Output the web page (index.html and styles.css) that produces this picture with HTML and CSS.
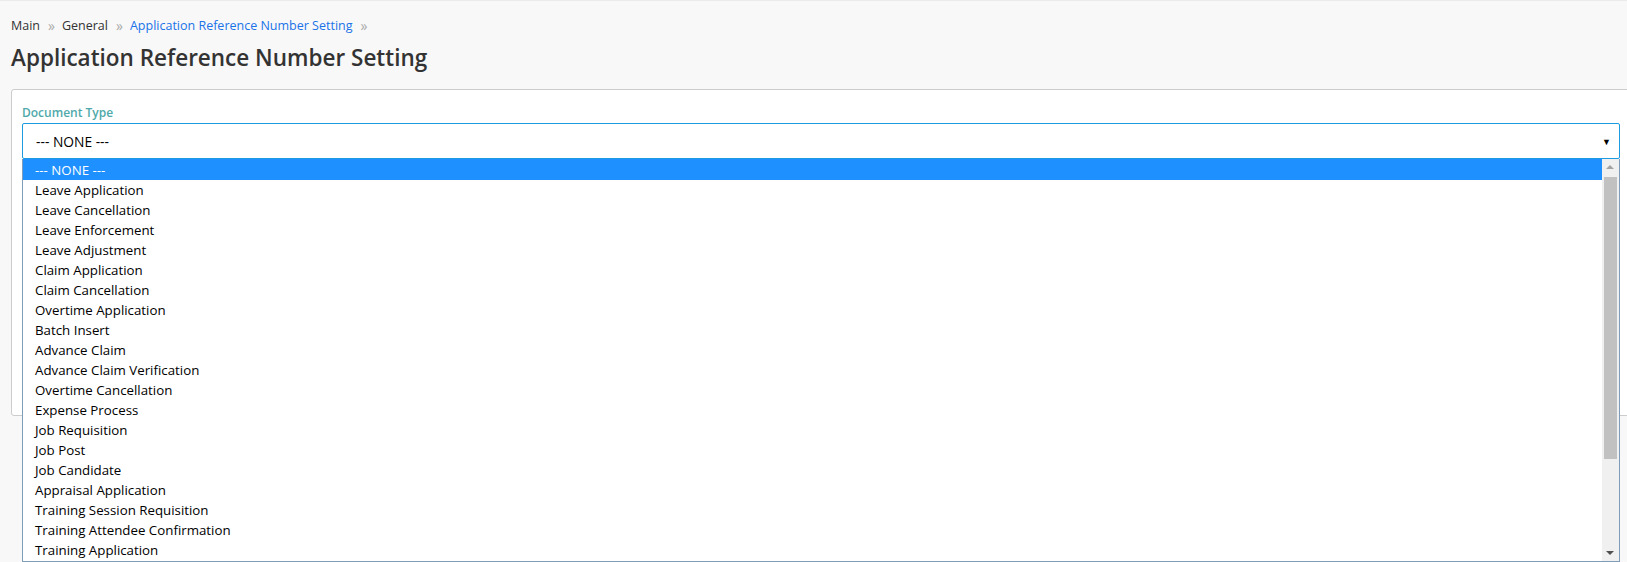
FILE: index.html
```html
<!DOCTYPE html>
<html>
<head>
<meta charset="utf-8">
<link rel="stylesheet" href="styles.css">
</head>
<body>
<div class="page">
  <nav class="crumbs">
    <span class="crumb">Main</span><span class="sep">»</span>
    <span class="crumb">General</span><span class="sep">»</span>
    <span class="crumb active">Application Reference Number Setting</span><span class="sep">»</span>
  </nav>
  <h1 class="title">Application Reference Number Setting</h1>
  <div class="card">
    <label class="label">Document Type</label>
    <div class="select-wrap">
      <div class="select">
        <span class="select-value">--- NONE ---</span>
        <span class="caret">▼</span>
      </div>
      <div class="dropdown">
        <ul class="options">
          <li class="opt selected">--- NONE ---</li>
          <li class="opt">Leave Application</li>
          <li class="opt">Leave Cancellation</li>
          <li class="opt">Leave Enforcement</li>
          <li class="opt">Leave Adjustment</li>
          <li class="opt">Claim Application</li>
          <li class="opt">Claim Cancellation</li>
          <li class="opt">Overtime Application</li>
          <li class="opt">Batch Insert</li>
          <li class="opt">Advance Claim</li>
          <li class="opt">Advance Claim Verification</li>
          <li class="opt">Overtime Cancellation</li>
          <li class="opt">Expense Process</li>
          <li class="opt">Job Requisition</li>
          <li class="opt">Job Post</li>
          <li class="opt">Job Candidate</li>
          <li class="opt">Appraisal Application</li>
          <li class="opt">Training Session Requisition</li>
          <li class="opt">Training Attendee Confirmation</li>
          <li class="opt">Training Application</li>
        </ul>
        <div class="scrollbar">
          <div class="arrow up"></div>
          <div class="track"><div class="thumb"></div></div>
          <div class="arrow down"></div>
        </div>
      </div>
    </div>
  </div>
</div>
</body>
</html>
```
FILE: styles.css
```css
html, body {
  margin: 0;
  padding: 0;
  height: 100%;
  overflow: hidden;
}
body {
  background: #f8f8f8;
  border-top: 1px solid #ebebeb;
  box-sizing: border-box;
  font-family: "Open Sans", "Noto Sans", sans-serif;
  color: #333;
}
.page {
  padding-left: 11px;
}
.crumbs {
  padding-top: 16px;
  font-size: 12.5px;
  line-height: 17px;
  display: flex;
  align-items: center;
  color: #333;
}
.sep {
  color: #aaa;
  margin: 0 7px 0 8px;
  font-size: 14px;
}
.crumb.active {
  color: #1a73e8;
}
.title {
  margin: 7px 0 0 0;
  font-size: 22.5px;
  line-height: 34px;
  font-weight: 600;
  color: #333;
}
.card {
  margin-top: 14px;
  margin-right: -10px;
  background: #fff;
  border: 1px solid #ccc;
  border-radius: 3px;
  padding: 15px 16px 0 10px;
  height: 327px;
  box-sizing: border-box;
}
.label {
  display: block;
  font-size: 12px;
  font-weight: 600;
  color: #4fa9aa;
  line-height: 16px;
}
.select-wrap {
  position: relative;
  margin-top: 2px;
}
.select {
  height: 36px;
  box-sizing: border-box;
  border: 1px solid #1e9be0;
  border-radius: 2px;
  display: flex;
  align-items: center;
  justify-content: space-between;
  padding: 0 8px 0 13px;
  font-size: 13.8px;
  color: #000;
}
.caret {
  font-size: 9px;
  color: #000;
}
.dropdown {
  position: absolute;
  left: 0;
  right: 0;
  top: 36px;
  height: 403px;
  box-sizing: border-box;
  border: 1px solid #7f9db9;
  border-top: none;
  background: #fff;
  display: flex;
}
.options {
  list-style: none;
  margin: 0;
  padding: 1px 0 0 0;
  flex: 1;
  overflow: hidden;
  font-size: 13.3px;
}
.opt {
  height: 20px;
  line-height: 21px;
  padding-left: 12px;
  color: #000;
  white-space: nowrap;
}
.opt.selected {
  height: 21px;
  line-height: 22px;
  margin-top: -1px;
  background: #1e90ff;
  color: #fff;
}
.scrollbar {
  width: 17px;
  background: #f0f0f0;
  display: flex;
  flex-direction: column;
}
.arrow {
  height: 17px;
  position: relative;
}
.arrow::after {
  content: "";
  position: absolute;
  left: 4px;
  width: 0;
  height: 0;
  border-left: 4px solid transparent;
  border-right: 4px solid transparent;
}
.arrow.up::after {
  top: 6px;
  border-bottom: 4px solid #a3a3a3;
}
.arrow.down::after {
  top: 7px;
  border-top: 4px solid #505050;
}
.track {
  flex: 1;
  padding: 1px 2px;
}
.thumb {
  height: 282px;
  background: #c1c1c1;
}
```
